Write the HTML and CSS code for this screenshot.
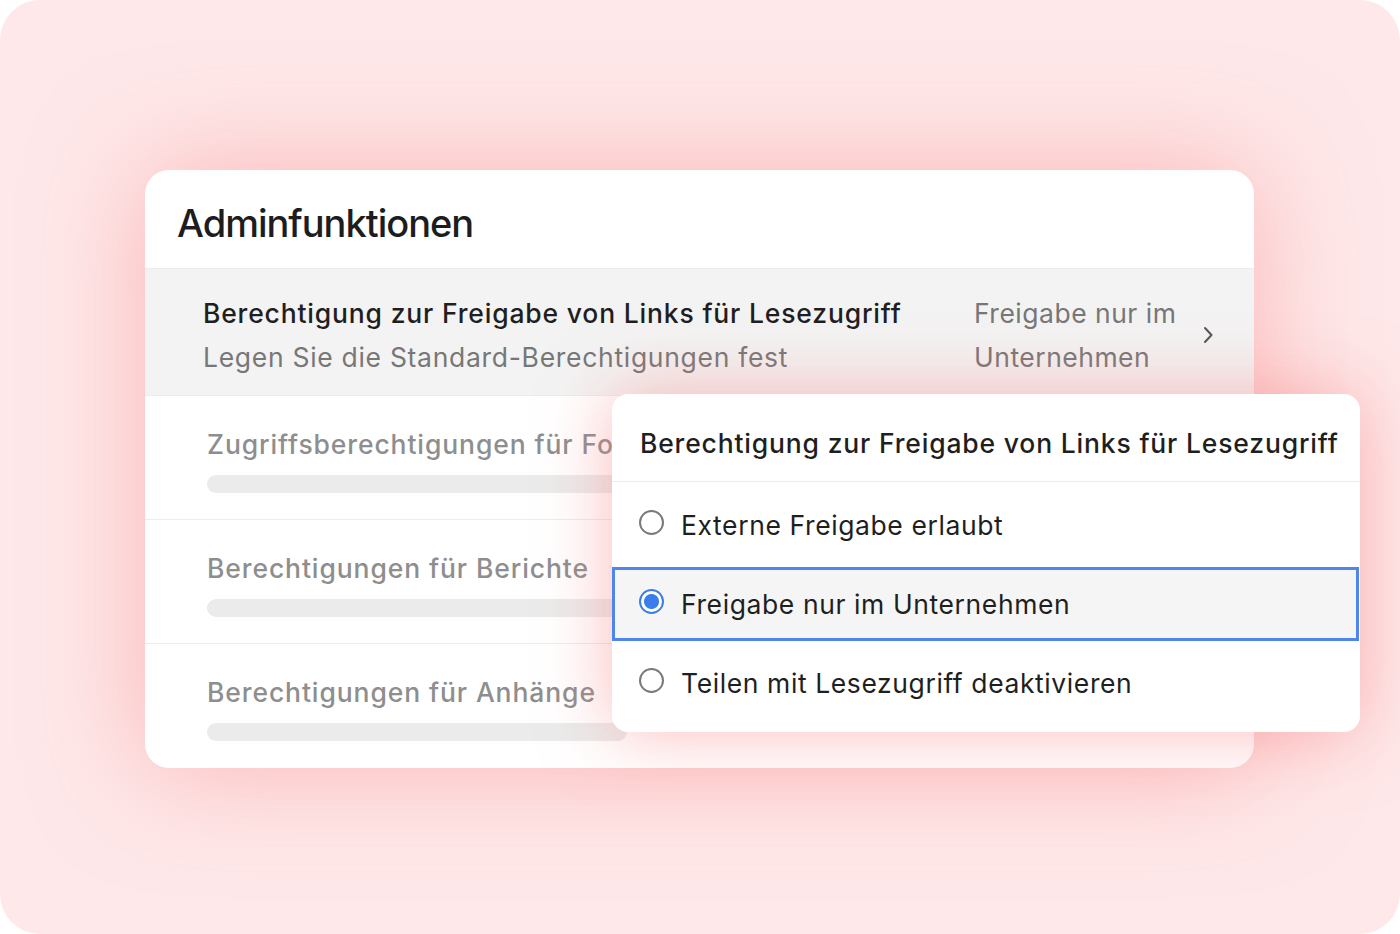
FILE: index.html
```html
<!DOCTYPE html>
<html lang="de">
<head>
    <meta charset="UTF-8">
    <meta name="viewport" content="width=device-width, initial-scale=1.0">
    <title>Adminfunktionen</title>
    <link rel="stylesheet" href="styles.css">
</head>
<body>

<div class="frame">
    <div class="card">
        <header class="card-head">
            <h1>Adminfunktionen</h1>
        </header>

        <!-- aktive Zeile -->
        <section class="row row-active">
            <div class="row-main">
                <p class="row-title">Berechtigung zur Freigabe von Links für Lesezugriff</p>
                <p class="row-sub">Legen Sie die Standard-Berechtigungen fest</p>
            </div>
            <div class="row-value">Freigabe nur im<br>Unternehmen</div>
            <svg class="chevron" width="12" height="18" viewBox="0 0 12 18">
                <path d="M3 2 L9.5 9 L3 16" fill="none" stroke="#555" stroke-width="2" stroke-linecap="round" stroke-linejoin="round"/>
            </svg>
        </section>

        <section class="row row-muted">
            <p class="row-label">Zugriffsberechtigungen für Fo</p>
            <div class="skeleton"></div>
        </section>

        <section class="row row-muted">
            <p class="row-label">Berechtigungen für Berichte</p>
            <div class="skeleton"></div>
        </section>

        <section class="row row-muted row-last">
            <p class="row-label">Berechtigungen für Anhänge</p>
            <div class="skeleton"></div>
        </section>

        <!-- Auswahl-Popup -->
        <div class="popup">
            <div class="popup-head">Berechtigung zur Freigabe von Links für Lesezugriff</div>
            <label class="option opt-first">
                <span class="radio"></span>
                Externe Freigabe erlaubt
            </label>
            <label class="option selected">
                <span class="radio checked"></span>
                Freigabe nur im Unternehmen
            </label>
            <label class="option opt-last">
                <span class="radio"></span>
                Teilen mit Lesezugriff deaktivieren
            </label>
        </div>
    </div>
</div>

</body>
</html>
```

FILE: styles.css
```css
body {
    margin: 0;
    background-color: #ffffff;
    font-family: Inter, "Noto Sans", sans-serif;
}

p {
    margin: 0;
}

/* rosa Hintergrundfläche */
.frame {
    width: 1400px;
    height: 934px;
    box-sizing: border-box;
    padding: 170px 0 0 145px;
    border-radius: 40px;
    background-color: #fee8e9;
    overflow: hidden;
}

.card {
    position: relative;
    width: 1109px;
    height: 598px;
    background-color: white;
    border-radius: 24px;
    box-shadow: 0 0 110px rgba(250, 140, 140, 0.55);
}

.card-head {
    height: 99px;
    box-sizing: border-box;
    padding: 30px 0 0 32px;
    border-bottom: 1px solid #ececec;
}

.card-head h1 {
    margin: 0;
    font-size: 38px;
    font-weight: 500;
    color: #1d1d1f;
    letter-spacing: -1px;
    line-height: 46px;
}

.row {
    height: 124px;
    box-sizing: border-box;
    border-bottom: 1px solid #ececec;
}

.row-last {
    border-bottom: none;
    border-radius: 0 0 24px 24px;
}

.row-active {
    display: flex;
    align-items: center;
    padding: 5px 40px 0 58px;
    height: 127px;
    background-color: #f3f3f3;
    font-size: 26.5px;
    line-height: 44px;
    letter-spacing: 0.7px;
}

.row-main {
    flex: 1;
}

.row-title {
    color: #1f1f1f;
    font-weight: 500;
    letter-spacing: 0.82px;
}

.row-sub {
    color: #777;
}

.row-value {
    width: 228px;
    color: #777;
    letter-spacing: 0.5px;
}

.row-muted {
    padding: 28px 0 0 62px;
}

.row-label {
    white-space: nowrap;
    font-size: 26.5px;
    line-height: 40px;
    letter-spacing: 0.9px;
    color: #8e8e8e;
    font-weight: 500;
}

.skeleton {
    width: 420px;
    height: 18px;
    margin-top: 11px;
    border-radius: 9px;
    background-color: #ebebeb;
}

/* Popup über der Liste */
.popup {
    position: absolute;
    left: 467px;
    top: 224px;
    width: 748px;
    height: 338px;
    box-sizing: border-box;
    background-color: white;
    border-radius: 16px;
    box-shadow: 0 0 70px rgba(248, 130, 130, 0.55);
    overflow: hidden;
    font-size: 26.5px;
    letter-spacing: 0.6px;
    color: #1f1f1f;
}

.popup-head {
    height: 88px;
    box-sizing: border-box;
    padding: 29px 0 0 28px;
    line-height: 40px;
    font-weight: 500;
    letter-spacing: 0.82px;
    border-bottom: 1px solid #ececec;
}

.option {
    display: flex;
    align-items: center;
    gap: 17px;
    padding-left: 27px;
    box-sizing: border-box;
}

.opt-first {
    height: 85px;
}

.opt-last {
    height: 84px;
}

.selected {
    height: 74px;
    padding-left: 24px;
    margin-right: 1px;
    border: 3px solid #4f86ec;
    background-color: #f5f5f5;
}

.radio {
    width: 25px;
    height: 25px;
    box-sizing: border-box;
    border: 2px solid #7a7a7a;
    border-radius: 50%;
    margin-top: -5px;
}

.radio.checked {
    border: 2px solid #3b7ded;
    background: radial-gradient(circle, #3b7ded 0 7px, white 8px);
}
```
